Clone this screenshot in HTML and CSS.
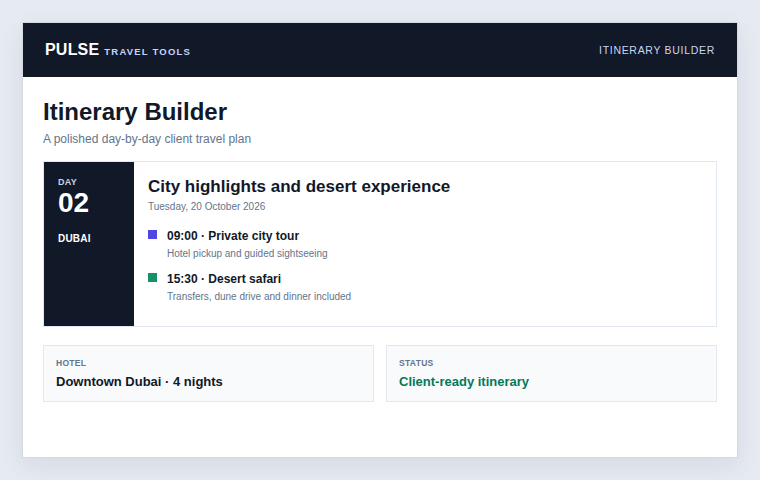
FILE: index.html
```html
<!DOCTYPE html>
<html lang="en">
<head>
<meta charset="utf-8">
<title>Itinerary Builder</title>
<link rel="stylesheet" href="styles.css">
</head>
<body>
<div class="app">
  <header class="topbar">
    <div class="brand"><span class="brand-name">PULSE</span><span class="brand-sub">TRAVEL TOOLS</span></div>
    <div class="topbar-title">ITINERARY BUILDER</div>
  </header>
  <main class="content">
    <h1 class="page-title">Itinerary Builder</h1>
    <p class="page-sub">A polished day-by-day client travel plan</p>

    <section class="day">
      <div class="day-side">
        <div class="day-label">DAY</div>
        <div class="day-num">02</div>
        <div class="day-city">DUBAI</div>
      </div>
      <div class="day-body">
        <h2 class="day-title">City highlights and desert experience</h2>
        <div class="day-date">Tuesday, 20 October 2026</div>
        <ul class="events">
          <li class="event">
            <span class="marker marker-indigo"></span>
            <div>
              <div class="event-title">09:00 · Private city tour</div>
              <div class="event-note">Hotel pickup and guided sightseeing</div>
            </div>
          </li>
          <li class="event">
            <span class="marker marker-green"></span>
            <div>
              <div class="event-title">15:30 · Desert safari</div>
              <div class="event-note">Transfers, dune drive and dinner included</div>
            </div>
          </li>
        </ul>
      </div>
    </section>

    <section class="facts">
      <div class="fact">
        <div class="fact-label">HOTEL</div>
        <div class="fact-value">Downtown Dubai · 4 nights</div>
      </div>
      <div class="fact">
        <div class="fact-label">STATUS</div>
        <div class="fact-value fact-ok">Client-ready itinerary</div>
      </div>
    </section>
  </main>
</div>
</body>
</html>
```

FILE: styles.css
```css
* { box-sizing: border-box; }

html, body {
  margin: 0;
  padding: 0;
}

body {
  background: #e6eaf1;
  font-family: "Liberation Sans", Arial, sans-serif;
  color: #111827;
  padding: 22px;
  height: 480px;
}

.app {
  background: #ffffff;
  border: 1px solid #d3d9e2;
  box-shadow: 0 8px 24px rgba(30, 41, 59, 0.08);
  height: 436px;
}

.topbar {
  background: #111827;
  height: 54px;
  display: flex;
  align-items: center;
  justify-content: space-between;
  padding: 0 22px;
}

.brand {
  display: flex;
  align-items: baseline;
  gap: 5px;
}

.brand-name {
  color: #ffffff;
  font-size: 16px;
  font-weight: 700;
  letter-spacing: 0.2px;
}

.brand-sub {
  color: #c7d2fe;
  font-size: 9.5px;
  font-weight: 700;
  letter-spacing: 1.2px;
}

.topbar-title {
  color: #cbd5f5;
  font-size: 10.5px;
  letter-spacing: 0.7px;
}

.content {
  padding: 20px 20px 0;
}

.page-title {
  margin: 0;
  font-size: 24px;
  font-weight: 700;
  color: #111827;
  line-height: 30px;
}

.page-sub {
  margin: 4px 0 0;
  font-size: 12px;
  color: #64748b;
  line-height: 16px;
}

.day {
  margin-top: 14px;
  display: flex;
  border: 1px solid #e2e8f0;
  height: 166px;
}

.day-side {
  width: 90px;
  background: #111827;
  color: #ffffff;
  padding: 15px 14px;
}

.day-label {
  font-size: 9px;
  font-weight: 700;
  color: #cbd5e1;
  letter-spacing: 0.3px;
  line-height: 10px;
}

.day-num {
  font-size: 28px;
  font-weight: 700;
  line-height: 30px;
  margin-top: 1px;
}

.day-city {
  margin-top: 15px;
  font-size: 10px;
  font-weight: 700;
  line-height: 12px;
  letter-spacing: 0.2px;
}

.day-body {
  flex: 1;
  padding: 15px 14px;
}

.day-title {
  margin: 0;
  font-size: 17px;
  font-weight: 700;
  line-height: 20px;
  color: #111827;
}

.day-date {
  margin-top: 4px;
  font-size: 10px;
  color: #64748b;
  line-height: 12px;
}

.events {
  list-style: none;
  margin: 16px 0 0;
  padding: 0;
  display: flex;
  flex-direction: column;
  gap: 12px;
}

.event {
  display: flex;
  gap: 10px;
  align-items: flex-start;
}

.marker {
  width: 9px;
  height: 9px;
  margin-top: 1px;
  flex: none;
}

.marker-indigo { background: #4f46e5; }
.marker-green { background: #169068; }

.event-title {
  font-size: 12px;
  font-weight: 700;
  line-height: 14px;
  color: #111827;
}

.event-note {
  margin-top: 5px;
  font-size: 10px;
  color: #64748b;
  line-height: 12px;
}

.facts {
  margin-top: 18px;
  display: grid;
  grid-template-columns: 1fr 1fr;
  gap: 12px;
}

.fact {
  background: #f8fafc;
  border: 1px solid #e2e8f0;
  height: 57px;
  padding: 12px 12px;
}

.fact-label {
  font-size: 8.5px;
  font-weight: 700;
  color: #64748b;
  letter-spacing: 0.3px;
  line-height: 10px;
}

.fact-value {
  margin-top: 6px;
  font-size: 13px;
  font-weight: 700;
  color: #111827;
  line-height: 16px;
}

.fact-ok { color: #047857; }
```
